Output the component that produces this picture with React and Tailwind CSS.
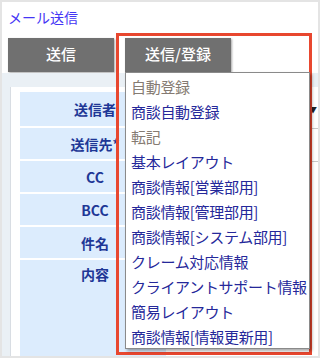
import React from 'react';

const labels = [
  { text: '送信者', h: 'h-[34px]' },
  { text: '送信先*', h: 'h-[31px]' },
  { text: 'CC', h: 'h-[31px]' },
  { text: 'BCC', h: 'h-[31px]' },
  { text: '件名', h: 'h-[31px]' },
  { text: '内容', h: 'h-[96px]' },
];

const items = [
  { text: '自動登録', header: true },
  { text: '商談自動登録' },
  { text: '転記', header: true },
  { text: '基本レイアウト' },
  { text: '商談情報[営業部用]' },
  { text: '商談情報[管理部用]' },
  { text: '商談情報[システム部用]' },
  { text: 'クレーム対応情報' },
  { text: 'クライアントサポート情報' },
  { text: '簡易レイアウト' },
  { text: '商談情報[情報更新用]' },
];

const font = { fontFamily: '"Noto Sans CJK JP", "Noto Sans", sans-serif' };

export default function App() {
  return (
    <div
      className="relative w-[320px] h-[358px] overflow-hidden bg-white border-2 border-[#e4e4e4] flex flex-col"
      style={font}
    >
      <div className="pl-[6px] pt-[5px] h-[36px] text-[14px] text-[#4536f5] leading-[20px]">
        <a href="#">メール送信</a>
      </div>

      {/* tabs */}
      <div className="flex gap-[11px] pl-[6px] h-[36px] items-start">
        <button className="w-[106px] h-[34px] bg-[#707070] text-white text-[15px] font-medium shadow-[1px_1px_2px_rgba(0,0,0,0.35)]">
          送信
        </button>
        <button className="w-[106px] h-[34px] bg-[#707070] text-white text-[15px] font-medium shadow-[1px_1px_2px_rgba(0,0,0,0.35)]">
          送信/登録
        </button>
      </div>

      {/* form area */}
      <div className="flex-1 bg-[#eaf0f5] pt-[14px] pl-[8px] flex">
        <div className="flex-1 bg-white pt-[5px] pl-[9px] flex border-l border-[#d8dde3]">
          <div className="w-[146px] flex flex-col gap-[2px]">
            {labels.map((l, i) => (
              <div
                key={l.text}
                className={`${l.h} bg-[#dcecfd] flex justify-center ${
                  i === 5 ? 'items-start pt-[5px]' : 'items-center'
                } pl-[4px] text-[14px] font-bold text-[#1e3796] leading-[18px] whitespace-nowrap`}
              >
                {l.text}
              </div>
            ))}
          </div>
          <div className="flex-1 flex flex-col gap-[2px] pl-[143px]">
            <div className="h-[34px] text-[8px] pt-[12px] text-[#222]">▼</div>
            <div className="h-[31px] border-t border-[#c8c8c8]" />
            <div className="h-[31px] border-t border-[#c8c8c8]" />
          </div>
        </div>
      </div>

      {/* highlight box */}
      <div className="absolute left-[114px] top-[31px] w-[196px] h-[322px] border-[3px] border-[#e8472f]" />

      {/* dropdown menu */}
      <div className="absolute left-[123px] top-[70px] w-[185px] h-[277px] bg-white border border-[#8a8a8a] shadow-[2px_2px_3px_rgba(0,0,0,0.35)] pt-[1px] pl-[5px]">
        {items.map((it) => (
          <div
            key={it.text}
            className={`h-[25px] leading-[25px] text-[15px] tracking-[-0.3px] whitespace-nowrap ${
              it.header ? 'text-[#857b72]' : 'text-[#25289a]'
            }`}
          >
            {it.text}
          </div>
        ))}
      </div>
    </div>
  );
}
